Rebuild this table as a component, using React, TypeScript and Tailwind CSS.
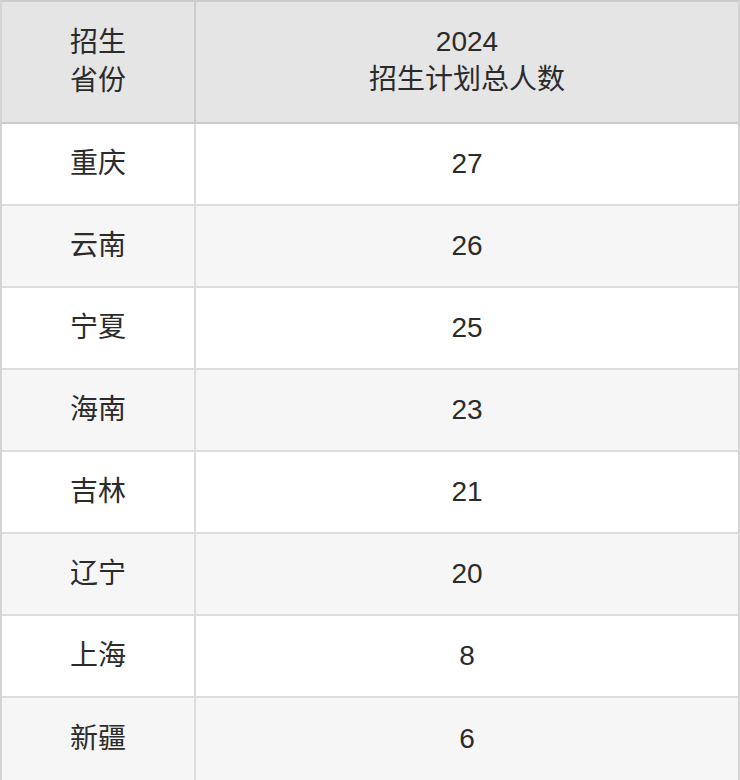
const rows: [string, string][] = [
  ['重庆', '27'],
  ['云南', '26'],
  ['宁夏', '25'],
  ['海南', '23'],
  ['吉林', '21'],
  ['辽宁', '20'],
  ['上海', '8'],
  ['新疆', '6'],
];

export default function App() {
  return (
    <div
      className="w-[740px] text-[#2b2b2b] text-[28px] leading-[38px]"
      style={{ fontFamily: '"Liberation Sans", "Noto Sans CJK SC", sans-serif' }}
    >
      <div className="border-2 border-[#d4d4d4] border-t-[#cccccc]">
        {/* header */}
        <div className="flex h-[122px] bg-[#e5e5e5] border-b-2 border-[#cccccc]">
          <div className="w-[194px] shrink-0 flex items-center justify-center text-center border-r-2 border-[#cccccc]">
            招生
            <br />
            省份
          </div>
          <div className="flex-1 flex items-center justify-center text-center pb-[2px]">
            2024
            <br />
            招生计划总人数
          </div>
        </div>

        {rows.map(([prov, n], i) => (
          <div
            key={prov}
            className={[
              'flex h-[82px]',
              i % 2 === 1 ? 'bg-[#f6f6f6]' : 'bg-white',
              i < rows.length - 1 ? 'border-b-2 border-[#dddddd]' : '',
            ].join(' ')}
          >
            <div className="w-[194px] shrink-0 flex items-center justify-center border-r-2 border-[#dddddd]">
              {prov}
            </div>
            <div className="flex-1 flex items-center justify-center">{n}</div>
          </div>
        ))}
      </div>
    </div>
  );
}
